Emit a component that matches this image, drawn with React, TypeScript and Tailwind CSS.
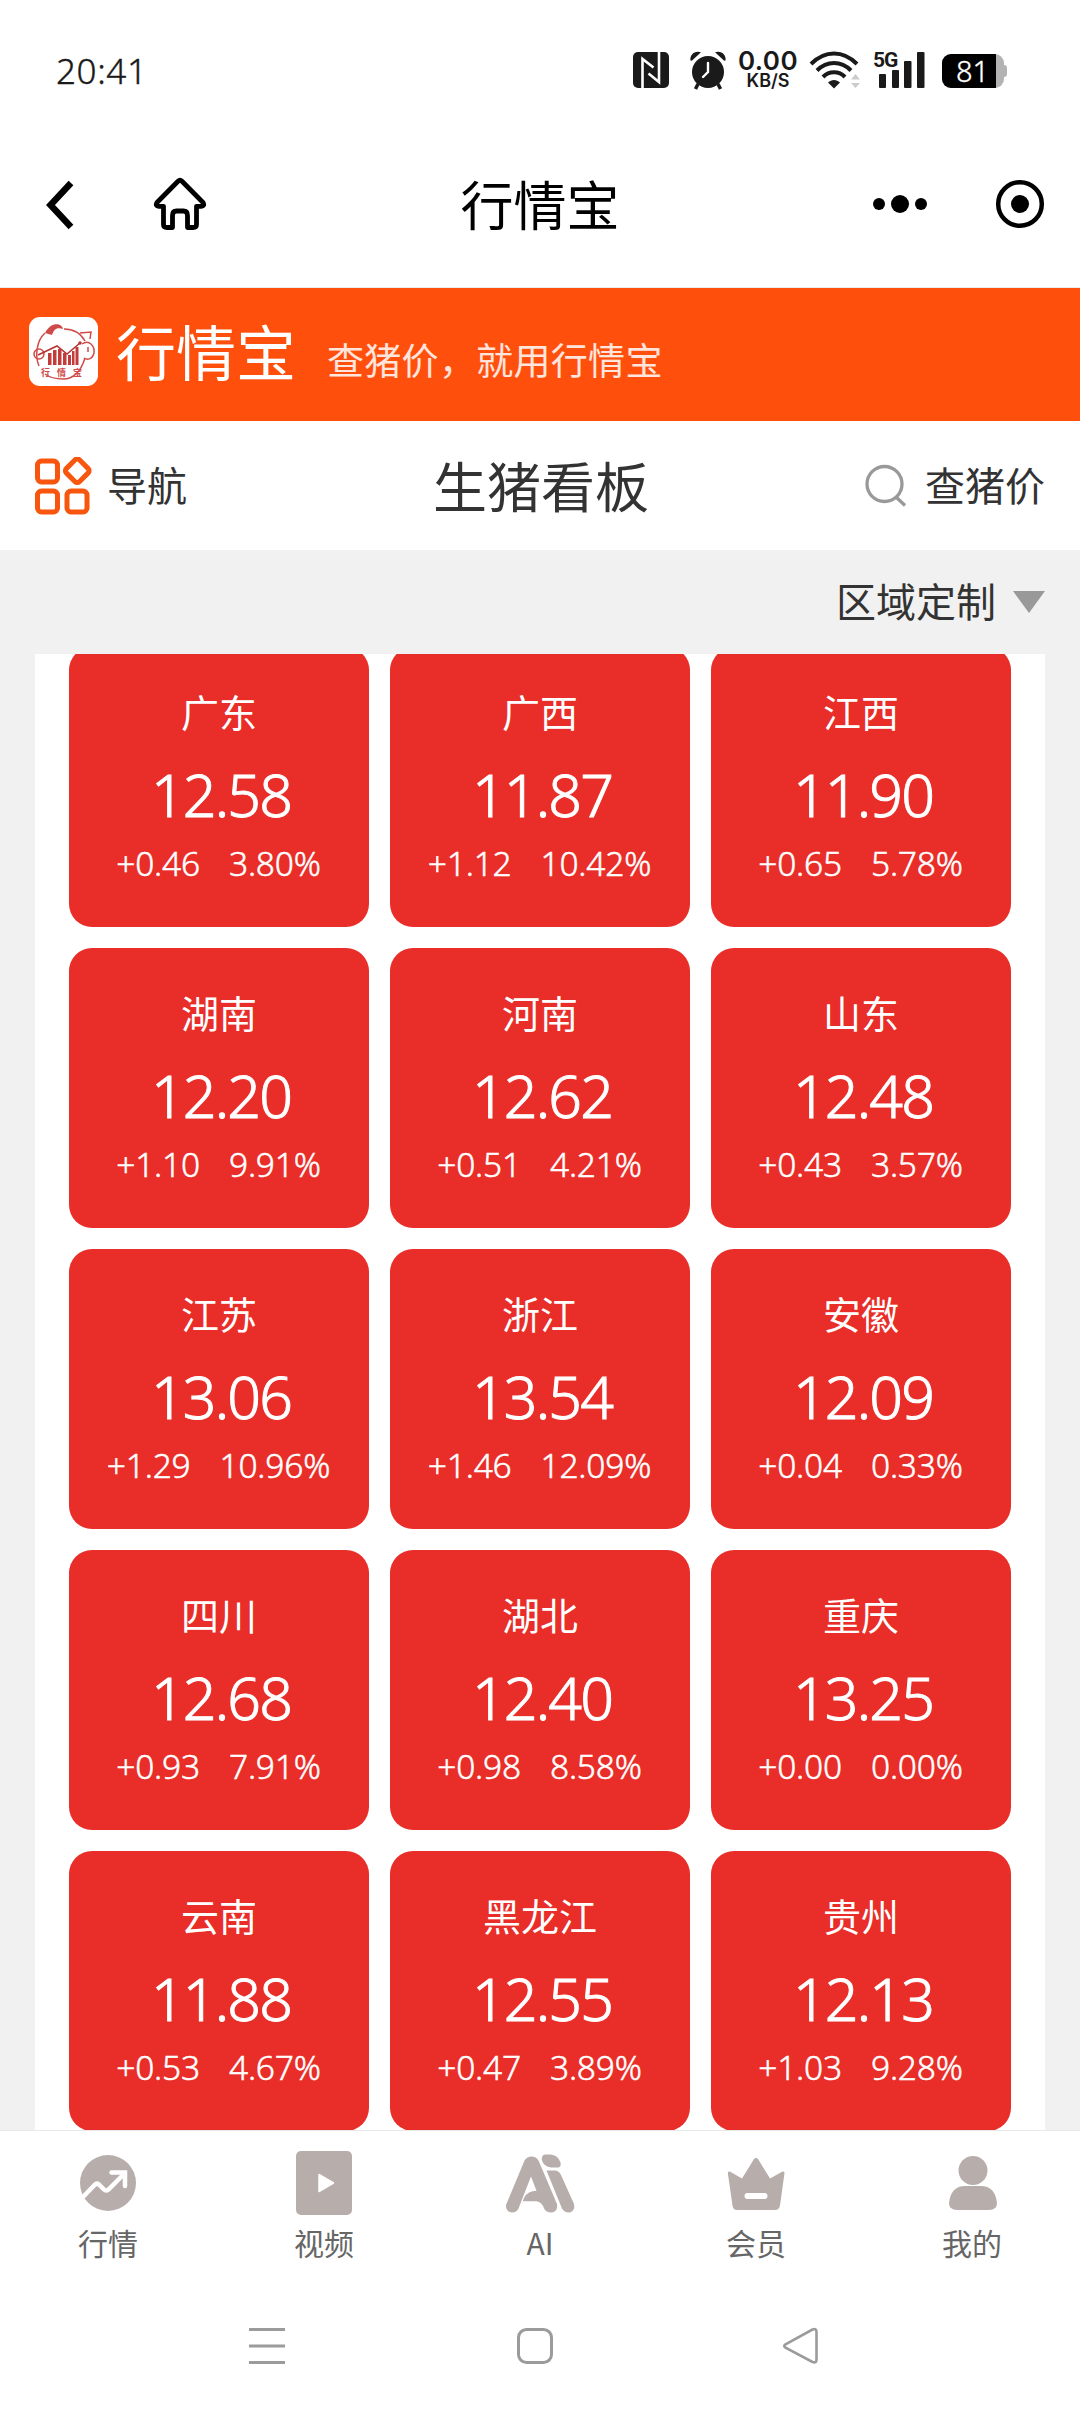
import React from "react";

const kai = "font-['KaiTi','Noto_Sans_CJK_SC',sans-serif]";

type Item = { name: string; price: string; diff: string; pct: string };

const items: Item[] = [
  { name: "广东", price: "12.58", diff: "+0.46", pct: "3.80%" },
  { name: "广西", price: "11.87", diff: "+1.12", pct: "10.42%" },
  { name: "江西", price: "11.90", diff: "+0.65", pct: "5.78%" },
  { name: "湖南", price: "12.20", diff: "+1.10", pct: "9.91%" },
  { name: "河南", price: "12.62", diff: "+0.51", pct: "4.21%" },
  { name: "山东", price: "12.48", diff: "+0.43", pct: "3.57%" },
  { name: "江苏", price: "13.06", diff: "+1.29", pct: "10.96%" },
  { name: "浙江", price: "13.54", diff: "+1.46", pct: "12.09%" },
  { name: "安徽", price: "12.09", diff: "+0.04", pct: "0.33%" },
  { name: "四川", price: "12.68", diff: "+0.93", pct: "7.91%" },
  { name: "湖北", price: "12.40", diff: "+0.98", pct: "8.58%" },
  { name: "重庆", price: "13.25", diff: "+0.00", pct: "0.00%" },
  { name: "云南", price: "11.88", diff: "+0.53", pct: "4.67%" },
  { name: "黑龙江", price: "12.55", diff: "+0.47", pct: "3.89%" },
  { name: "贵州", price: "12.13", diff: "+1.03", pct: "9.28%" },
];

function StatusBar() {
  return (
    <div className="flex h-[120px] shrink-0 items-start pt-[50px] pl-[56px] pr-[72px] text-[#1a1a1a]">
      <div className="mt-[-2px] h-10 font-['Noto_Sans',sans-serif] text-[35px] leading-[46px] font-light tracking-[0.6px] [-webkit-text-stroke:0.4px_currentColor]">20:41</div>
      <div className="ml-auto flex h-10 items-center">
        <svg width="36" height="36" viewBox="0 0 36 36" className="mr-[20px]">
          <rect width="36" height="36" rx="5" fill="#1a1a1a" />
          <path d="M9.500 36V7l11 8.500M26 0v30L15.500 21.500" fill="none" stroke="#fff" strokeWidth="2.600" />
        </svg>
        <svg width="38" height="40" viewBox="0 0 38 40" className="mr-[10px]">
          <g fill="#1a1a1a">
            <circle cx="19" cy="22" r="16" />
            <path d="M1.500 10.500C.5 5 5.500 0 12 2.200L2.800 10.800ZM36.500 10.500C37.500 5 32.500 0 26 2.200l9.200 8.600Z" />
            <path d="m9 34-2.500 5M29 34l2.500 5" stroke="#1a1a1a" strokeWidth="3.500" />
          </g>
          <path d="M19 13v9l-5 5" fill="none" stroke="#fff" strokeWidth="2.400" strokeLinecap="round" />
        </svg>
        <div className="mr-[10px] flex w-[62px] flex-col items-center font-['Inter',sans-serif]">
          <span className="text-[26px] leading-[22px] font-semibold tracking-[0.4px]">0.00</span>
          <span className="text-[18px] leading-[18px] font-semibold">KB/S</span>
        </div>
        <svg width="52" height="38" viewBox="0 0 52 38" className="mr-[12px]">
          <g fill="none" stroke="#1a1a1a" strokeWidth="4">
            <path d="M2 13C16-1 34-1 48 13" />
            <path d="M8 19.500c10-10 24-10 34 0" />
            <path d="M14 26c6-6.300 16-6.300 22 0" />
          </g>
          <path d="M19 31.500c3.500-3.500 8.500-3.500 12 0L25 37.500Z" fill="#1a1a1a" />
          <path d="M42 28.500 46.500 23l4.500 5.500ZM42 32h9l-4.500 5Z" fill="#ccc" />
        </svg>
        <div className="relative mr-[17px] h-10 w-[52px]">
          <span className="absolute top-[1px] left-0 font-['Roboto',sans-serif] text-[21px] leading-[18px] font-bold tracking-[-1px]">5G</span>
          <svg width="52" height="38" viewBox="0 0 52 38" className="absolute top-[1px] left-0" fill="#1a1a1a">
            <rect x="6" y="23" width="7" height="14" rx="1" />
            <rect x="19" y="19" width="7" height="18" rx="1" />
            <rect x="31" y="10" width="7.500" height="27" rx="1" />
            <rect x="44" y="1" width="7.500" height="36" rx="1" />
          </svg>
        </div>
        <div className="mt-[2px] mr-[1px] flex items-center">
          <div className="flex h-[34px] w-[62px] rounded-[9px] bg-[#b3b3b3]">
            <div className="flex w-[54px] items-center justify-center rounded-l-[9px] bg-black pl-[7px] font-['Noto_Sans',sans-serif] text-[29px] leading-[34px] font-light text-white [-webkit-text-stroke:0.4px_currentColor]">81</div>
          </div>
          <div className="h-3 w-[3px] rounded-r bg-[#b3b3b3]" />
        </div>
      </div>
    </div>
  );
}

function TitleBar() {
  return (
    <div className="flex h-[168px] shrink-0 items-start border-b border-[#ececec] pt-[58px]">
      <div className="flex w-[330px] items-center pl-[45px]">
        <svg width="30" height="52" viewBox="0 0 30 52" fill="none" stroke="#000" strokeWidth="6.500">
          <path d="M26 4 5.500 26 26 48" />
        </svg>
        <svg width="54" height="54" viewBox="0 0 54 54" className="mt-[-1px] ml-[78px]" fill="none" stroke="#000" strokeWidth="4.800" strokeLinejoin="round">
          <path d="M25 4.200Q27 2.200 29 4.200L50 25.500Q52 29 48.500 29.300H43.500V47.500Q43.500 50.500 40 50.500H34.500V38.500Q34.500 34 30.500 34H23.500Q19.500 34 19.500 38.500V50.500H14Q10.500 50.500 10.500 47.500V29.300H5.500Q2 29 4 25.500Z" />
        </svg>
      </div>
      <div className={`mt-[-1px] flex-1 text-center text-[53px] leading-[52px] text-black ${kai}`}>行情宝</div>
      <div className="flex w-[330px] items-center justify-end pr-[34px]">
        <svg width="56" height="52" viewBox="0 0 56 52" className="mr-[66px]">
          <circle cx="7" cy="26" r="6" />
          <circle cx="28" cy="26" r="9" />
          <circle cx="49" cy="26" r="6" />
        </svg>
        <svg width="52" height="52" viewBox="0 0 52 52">
          <circle cx="26" cy="26" r="21.800" fill="none" stroke="#000" strokeWidth="4.500" />
          <circle cx="26" cy="26" r="9" />
        </svg>
      </div>
    </div>
  );
}

function Logo() {
  return (
    <svg width="70" height="70" viewBox="0 0 70 70" className="mt-[-6px] ml-[29px]">
      <rect width="69" height="69" rx="11" fill="#fff" />
      <g fill="none" stroke="#cf4a48" strokeWidth="1.500">
        <path d="M16 16C7 24 6 40 10 49M35 12C45 12 52 17 56 24M56 41C52 54 45 62 34 62 26 62 20 60 16 57" />
        <path d="M51 16 62 15 61 22M53 27C60 22 66 29 65 36 63 43 58 43 55 41" />
        <circle cx="10" cy="37" r="5" />
        <path d="M59 30v5" />
      </g>
      <path d="M16 16C22 4 33 6 34 12 27 10 25 13 23 18Z" fill="#cf4a48" />
      <path d="m9 38 19-9 10 8 13-11" fill="none" stroke="#b83434" strokeWidth="1.600" />
      <circle cx="51" cy="26" r="1.700" fill="#b83434" />
      <g fill="#c23c3b">
        <rect x="19" y="36" width="3.500" height="12" />
        <rect x="24" y="33" width="3.500" height="15" />
        <rect x="29" y="32" width="3.500" height="16" />
        <rect x="34" y="36" width="3.500" height="12" />
        <rect x="39" y="38" width="3" height="10" />
        <rect x="43" y="34" width="2.500" height="14" />
        <rect x="46.500" y="30" width="3" height="18" />
      </g>
      <g fill="#cf4a48" fontSize="9" fontFamily="Noto Sans CJK SC" fontWeight="700">
        <text x="12" y="58.500">行</text>
        <text x="28" y="58.500">情</text>
        <text x="44" y="58.500">宝</text>
      </g>
    </svg>
  );
}

function Card({ item }: { item: Item }) {
  return (
    <div className="flex h-[280px] flex-col items-center rounded-[23px] bg-[#e92d28] text-white">
      <div className={`mt-[41px] text-[38px] leading-[46px] ${kai}`}>{item.name}</div>
      <div className="mt-[25px] ml-[4px] font-['Noto_Sans',sans-serif] text-[59px] leading-[70px] font-light tracking-[-1.8px] [-webkit-text-stroke:1px_currentColor]">{item.price}</div>
      <div className="mt-[13px] mr-[1px] flex gap-[29px] font-['Noto_Sans',sans-serif] text-[33.5px] leading-[42px] font-light tracking-[-0.2px] [-webkit-text-stroke:0.5px_currentColor]">
        <span>{item.diff}</span>
        <span>{item.pct}</span>
      </div>
    </div>
  );
}

const tabFill = "#b7aeac";

const tabs = [
  {
    label: "行情",
    icon: (
      <svg width="56" height="64" viewBox="0 0 56 64">
        <circle cx="28" cy="32" r="28" fill={tabFill} />
        <path d="M3 46 14.500 34Q17 31.500 19.500 34L24 38.500Q26 40.500 28.500 38.500L43 24" fill="none" stroke="#fff" strokeWidth="4.500" />
        <path d="M31.500 21.500H45V35" fill="none" stroke="#fff" strokeWidth="4.500" strokeLinecap="round" />
      </svg>
    ),
  },
  {
    label: "视频",
    icon: (
      <svg width="56" height="64" viewBox="0 0 56 64">
        <rect y="0" width="56" height="64" rx="5" fill={tabFill} />
        <path d="M23 23.500v17L37.500 32Z" fill="#fff" stroke="#fff" strokeWidth="1.500" strokeLinejoin="round" />
      </svg>
    ),
  },
  {
    label: "AI",
    icon: (
      <svg width="72" height="64" viewBox="0 0 72 64" fill={tabFill}>
        <path d="M20.500 9.500Q23 5.500 27.500 5.500 32 5.500 34.500 9.500L53 53Q54 60.500 47.500 61.500 42 61.500 40 57.500 38 51 32.500 50.300H18.800Q21 42 28.500 40.300L32.500 39.800 27 25.500 14.500 57.500Q12.500 61.500 8 61.500 1.500 60.500 2 54Z" />
        <path d="M41 3.500h5.500Q54 4 56.500 11.500 57.500 16.500 53.500 16.500H47Q40 16 37.800 9 37.500 4 41 3.500Z" />
        <path d="M42.500 19.500h8Q55 19.500 57 24L70 53Q71.500 59.500 66 61.500 60.500 62 58 57.500Z" />
      </svg>
    ),
  },
  {
    label: "会员",
    icon: (
      <svg width="58" height="64" viewBox="0 0 58 64">
        <path d="M27 8q2-2 4 0L43 27.500 55.500 20.500q2-.5 2 1.500L53 54.500Q52 59 48 59H10Q6 59 5.500 54.500L.8 22q0-2 2-1.500L15 27.500Z" fill={tabFill} />
        <rect x="17.500" y="42" width="23" height="6" rx="3" fill="#fff" />
      </svg>
    ),
  },
  {
    label: "我的",
    icon: (
      <svg width="48" height="64" viewBox="0 0 48 64" className="ml-[2px]" fill={tabFill}>
        <circle cx="24" cy="19.500" r="14.500" />
        <path d="M0 52Q2 35 16 35H32Q46 35 48 52 48 59 40 59H8Q0 59 0 52Z" />
      </svg>
    ),
  },
];

export default function App() {
  return (
    <div className="flex h-[2412px] w-[1080px] flex-col overflow-hidden bg-white">
      <StatusBar />
      <TitleBar />

      <div className="flex h-[133px] shrink-0 items-center bg-[#ff4f0c] text-white">
        <Logo />
        <div className={`mt-[-9px] ml-[17px] text-[60px] leading-[80px] ${kai}`}>行情宝</div>
        <div className={`mt-[9px] ml-[31px] text-[37px] leading-[50px] tracking-[0.3px] text-white/85 ${kai}`}>查猪价，就用行情宝</div>
      </div>

      <div className={`flex h-[129px] shrink-0 items-center px-[35px] text-[40px] text-[#333] ${kai}`}>
        <div className="flex w-[330px] items-center">
          <svg width="58" height="58" viewBox="0 0 58 58" fill="none" stroke="#f8560f" strokeWidth="5">
            <rect x="2.500" y="4" width="20" height="21" rx="4" />
            <rect x="2.500" y="34" width="20" height="21" rx="4" />
            <rect x="32" y="34" width="20" height="21" rx="4" />
            <rect x="33" y="4.500" width="18.500" height="18.500" rx="3" transform="rotate(45 42.250 13.750)" />
          </svg>
          <span className="mt-[-4px] ml-[14px]">导航</span>
        </div>
        <div className="mt-[-2px] flex-1 pl-[2px] text-center text-[54px] leading-[60px]">生猪看板</div>
        <div className="flex w-[330px] items-center justify-end">
          <svg width="44" height="44" viewBox="0 0 44 44" className="mr-[17px]" fill="none" stroke="#999" strokeWidth="3.300">
            <circle cx="20.500" cy="20" r="17.500" />
            <path d="m32 33 9 8.500" />
          </svg>
          <span className="mt-[-4px]">查猪价</span>
        </div>
      </div>

      <div className={`flex h-[104px] shrink-0 items-center justify-end bg-[#f1f1f1] pr-[35px] text-[40px] text-[#333] ${kai}`}>
        <span className="mt-[-4px] mr-[17px]">区域定制</span>
        <svg width="32" height="22" viewBox="0 0 32 22">
          <path d="M0 0h32L16 22Z" fill="#999" />
        </svg>
      </div>

      <div className="h-[1476px] shrink-0 overflow-hidden bg-[#f1f1f1] px-[35px]">
        <div className="h-full overflow-hidden bg-white px-[34px]">
          <div className="mt-[-7px] grid grid-cols-3 gap-[21px]">
            {items.map((item) => (
              <Card key={item.name} item={item} />
            ))}
          </div>
        </div>
      </div>

      <div className="grid h-[150px] shrink-0 grid-cols-5 border-t border-[#e8e8e8]">
        {tabs.map((tab) => (
          <div key={tab.label} className="flex flex-col items-center pt-[20px]">
            {tab.icon}
            <span className={`mt-[7px] text-[30px] leading-[40px] text-[#666] ${kai}`}>{tab.label}</span>
          </div>
        ))}
      </div>

      <div className="flex h-[132px] shrink-0 items-start pt-[46px] pl-[248px]">
        <svg width="38" height="40" viewBox="0 0 38 40" stroke="#9b9b9b" strokeWidth="3">
          <path d="M1 3.500h36M1 20h36M1 36.500h36" />
        </svg>
        <svg width="40" height="40" viewBox="0 0 40 40" className="ml-[229px]" fill="none" stroke="#9b9b9b" strokeWidth="3">
          <rect x="3.500" y="3.500" width="33" height="33" rx="8" />
        </svg>
        <svg width="38" height="40" viewBox="0 0 38 40" className="ml-[227px]" fill="none" stroke="#9b9b9b" strokeWidth="2.600">
          <path d="M3.500 18.300 30.500 3.500Q34.500 2 34.500 6V33.500Q34.500 37.500 30.500 36L3.500 21.600Q1 20 3.500 18.300Z" />
        </svg>
      </div>
    </div>
  );
}
